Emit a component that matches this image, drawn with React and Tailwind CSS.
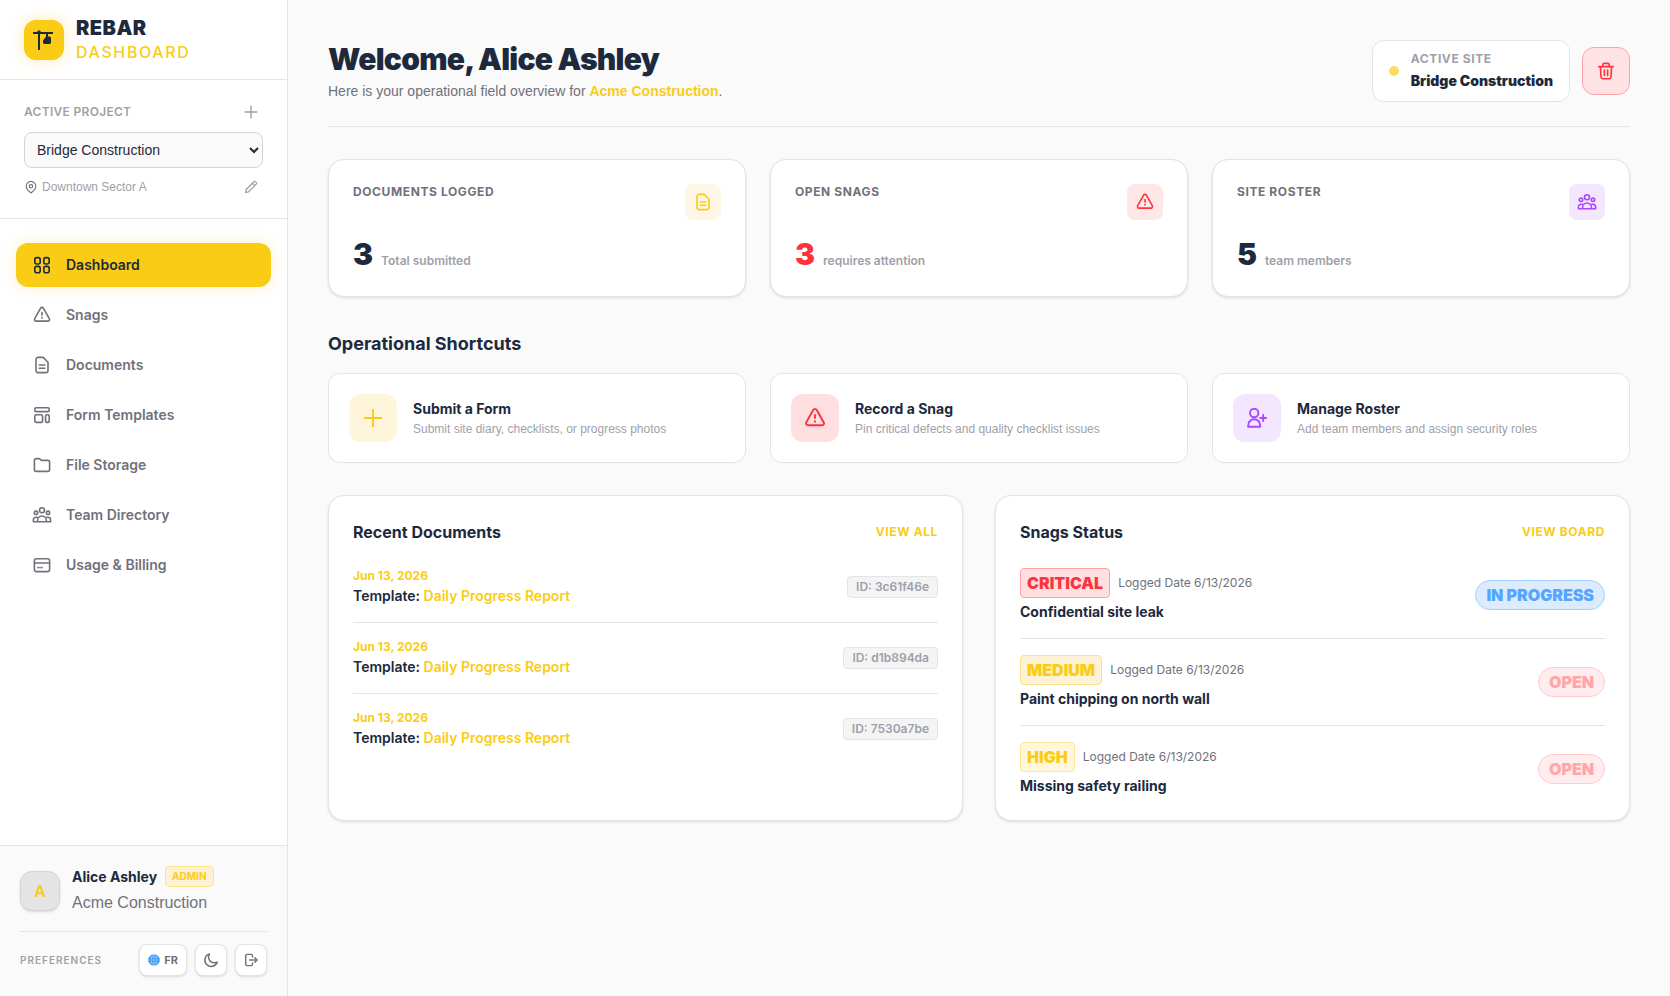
import { clsx } from 'clsx';

const icons = {
    grid: (
        <>
            <rect x="2.8" y="2.6" width="5.4" height="6.4" rx="2" />
            <rect x="11.8" y="2.6" width="5.4" height="6.4" rx="2" />
            <rect x="2.8" y="11.4" width="5.4" height="6.4" rx="2" />
            <rect x="11.8" y="11.4" width="5.4" height="6.4" rx="2" />
        </>
    ),
    alert: (
        <>
            <path d="M8.5 3.3a1.7 1.7 0 0 1 3 0l5.8 10.4a1.6 1.6 0 0 1-1.4 2.4H4.1a1.6 1.6 0 0 1-1.4-2.4z" />
            <path d="M10 7.5v2.6M10 12.6v.5" />
        </>
    ),
    document: (
        <>
            <path d="M4 4.4a2 2 0 0 1 2-2h5.2L16 7.2v8.4a2 2 0 0 1-2 2H6a2 2 0 0 1-2-2z" />
            <path d="M7.2 10h5.6M7.2 13.2h5.6" />
        </>
    ),
    template: (
        <>
            <rect x="2.8" y="2.8" width="14.4" height="3.8" rx="1.2" />
            <rect x="2.8" y="9.8" width="7.8" height="7.6" rx="1.4" />
            <rect x="13.6" y="9.8" width="3.6" height="7.6" rx="1.2" />
        </>
    ),
    folder: <path d="M2.4 5.4A1.8 1.8 0 0 1 4.2 3.6h2.6c.6 0 1 .2 1.4.6l.6.7c.3.3.7.5 1.2.5h5.8a1.8 1.8 0 0 1 1.8 1.8v7.4a1.8 1.8 0 0 1-1.8 1.8H4.2a1.8 1.8 0 0 1-1.8-1.8z" />,
    team: (
        <>
            <circle cx="10" cy="5.2" r="2.5" />
            <circle cx="4" cy="7.8" r="1.7" />
            <circle cx="16" cy="7.8" r="1.7" />
            <path d="M5.6 16.8v-1.4a4.4 4.4 0 0 1 8.8 0v1.4M5.2 12.2H4a2.6 2.6 0 0 0-2.6 2.6v2h17.2v-2a2.6 2.6 0 0 0-2.6-2.6h-1.2" />
        </>
    ),
    card: (
        <>
            <rect x="2.4" y="3.8" width="15.2" height="12.8" rx="2" />
            <path d="M2.4 8h15.2M6 12.6h1M9 12.6h1" />
        </>
    ),
    plus: <path d="M10 1.6v16.8M1.6 10h16.8" />,
    pencil: <path d="M2.2 17.8l.8-4.2L13.8 2.8a2.2 2.2 0 0 1 3.2 0l.2.2a2.2 2.2 0 0 1 0 3.2L6.4 17zM12 4.6L15.4 8" />,
    pin: (
        <>
            <path d="M10 18.4c2.8-2.2 6.8-5.2 6.8-9.6a6.8 6.8 0 0 0-13.6 0c0 4.4 4 7.4 6.8 9.6z" />
            <circle cx="10" cy="9" r="2.4" />
        </>
    ),
    trash: (
        <>
            <path d="M2.8 5.6h14.400M4.4 5.6l.6 10.4a2 2 0 0 0 2 1.8h6a2 2 0 0 0 2-1.8l.6-10.400" />
            <path d="M6.8 5.4V3.8a1.4 1.4 0 0 1 1.4-1.4h3.6a1.4 1.4 0 0 1 1.4 1.4v1.6M8.4 9v5.4M11.600 9v5.4" />
        </>
    ),
    userPlus: (
        <>
            <circle cx="7.200" cy="5" r="4.200" />
            <path d="M1.200 18.800v-1.600a6 6 0 0 1 12 0v1.600zM16.200 7v6M13.200 10h6" />
        </>
    ),
    moon: <path d="M8 2.400a8 8 0 1 0 9.800 10.400 7.400 7.400 0 0 1-3.400.6A7.200 7.200 0 0 1 8 2.400z" />,
    logout: (
        <>
            <path d="M12.200 5.800V4a2 2 0 0 0-2-2H4.400a2 2 0 0 0-2 2v12a2 2 0 0 0 2 2h5.800a2 2 0 0 0 2-2v-1.800" />
            <path d="M8 10h10.600M15.600 6.800l3.200 3.200-3.200 3.200" />
        </>
    ),
};

function Icon({ name, className, stroke = 1.6 }) {
    return (
        <svg
            viewBox="0 0 20 20"
            fill="none"
            stroke="currentColor"
            strokeWidth={stroke}
            strokeLinecap="round"
            strokeLinejoin="round"
            aria-hidden="true"
            className={clsx('shrink-0', className)}
        >
            {icons[name]}
        </svg>
    );
}

const navItems = [
    { icon: 'grid', label: 'Dashboard', active: true },
    { icon: 'alert', label: 'Snags' },
    { icon: 'document', label: 'Documents' },
    { icon: 'template', label: 'Form Templates' },
    { icon: 'folder', label: 'File Storage' },
    { icon: 'team', label: 'Team Directory' },
    { icon: 'card', label: 'Usage & Billing' },
];

const stats = [
    { label: 'Documents Logged', value: 3, note: 'Total submitted', icon: 'document', box: 'bg-[#fff7e6] text-[#facc15]', color: 'text-slate-800' },
    { label: 'Open Snags', value: 3, note: 'requires attention', icon: 'alert', box: 'bg-[#ffe6e7] text-[#ff333d]', color: 'text-[#ff333d]' },
    { label: 'Site Roster', value: 5, note: 'team members', icon: 'team', box: 'bg-[#f3e6ff] text-[#ad46ff]', color: 'text-slate-800' },
];

const shortcuts = [
    { title: 'Submit a Form', text: 'Submit site diary, checklists, or progress photos', icon: 'plus', box: 'bg-[#fff5db] text-[#facc15]' },
    { title: 'Record a Snag', text: 'Pin critical defects and quality checklist issues', icon: 'alert', box: 'bg-[#ffdfe0] text-[#ff333d]' },
    { title: 'Manage Roster', text: 'Add team members and assign security roles', icon: 'userPlus', box: 'bg-[#f3e6ff] text-[#ad46ff]' },
];

const documents = ['3c61f46e', 'd1b894da', '7530a7be'];

const snags = [
    { level: 'Critical', title: 'Confidential site leak', status: 'In Progress' },
    { level: 'Medium', title: 'Paint chipping on north wall', status: 'Open' },
    { level: 'High', title: 'Missing safety railing', status: 'Open' },
];

const levelStyles = {
    Critical: 'border-[#ffa2a6] bg-[#ffdfe0] text-[#ff333d]',
    Medium: 'border-[#fbe08a] bg-[#fdf1d6] text-[#facc15]',
    High: 'border-[#fde796] bg-[#fff6dc] text-[#facc15]',
};

const statusStyles = {
    'In Progress': 'border-[#a8cffc] bg-[#dcebfe] text-[#54a5ff]',
    Open: 'border-[#ffcacc] bg-[#ffecee] text-[#ffa6a9]',
};

function Sidebar() {
    return (
        <aside className="flex w-72 shrink-0 flex-col border-r border-zinc-200 bg-white">
            {/* Brand */}
            <div className="flex h-20 items-center gap-3 border-b border-zinc-200 px-6">
                <div className="flex size-10 items-center justify-center rounded-xl bg-[#facc15] shadow-[0_0_15px_rgba(251,191,36,0.35)]">
                    <svg viewBox="0 0 24 24" className="size-6 text-slate-800" fill="currentColor" aria-hidden="true">
                        <path d="M1 4h4l1.200-1.600h1.600L9 4h12v2h-5v2.600h2l1 1.200v5l-1 1.200h-6l-1-1.200v-2.400l3-3.800V6H8v16H6V6H1z" />
                    </svg>
                </div>
                <div className="flex flex-col">
                    <span className="text-xl leading-6 font-black tracking-wide text-slate-800">REBAR</span>
                    <span className="text-base leading-6 font-medium tracking-widest text-[#facc15]">DASHBOARD</span>
                </div>
            </div>

            {/* Project picker */}
            <div className="border-b border-zinc-200 px-6 pt-6 pb-[23px]">
                <div className="flex items-center justify-between">
                    <label htmlFor="project" className="text-xs font-semibold tracking-wide text-zinc-400 uppercase">Active Project</label>
                    <button type="button" aria-label="Add project" className="mr-1 p-px text-zinc-400">
                        <Icon name="plus" className="size-3.5" stroke={2} />
                    </button>
                </div>
                <select id="project" className="mt-3 h-9 w-full rounded-lg border border-zinc-300 bg-zinc-50 px-2 font-['Liberation_Sans',sans-serif] text-sm text-slate-800">
                    <option>Bridge Construction</option>
                </select>
                <div className="mt-[11px] flex items-center justify-between">
                    <span className="flex items-center gap-1 font-['Liberation_Sans',sans-serif] text-xs text-zinc-400">
                        <Icon name="pin" className="size-3.5 text-zinc-500" />
                        Downtown Sector A
                    </span>
                    <button type="button" aria-label="Edit project" className="mr-1 p-px text-zinc-400">
                        <Icon name="pencil" className="size-3.5" stroke={1.8} />
                    </button>
                </div>
            </div>

            <nav className="flex flex-1 flex-col gap-1.5 px-4 py-6">
                {navItems.map((item) => (
                    <a
                        key={item.label}
                        href="#"
                        className={clsx(
                            'flex h-11 items-center gap-3.5 rounded-xl px-4 text-sm font-semibold',
                            item.active
                                ? 'bg-[#facc15] text-slate-800 shadow-[0_0_15px_rgba(251,191,36,0.25)]'
                                : 'text-zinc-500',
                        )}
                    >
                        <Icon name={item.icon} className="size-5" />
                        {item.label}
                    </a>
                ))}
            </nav>

            {/* User */}
            <div className="border-t border-zinc-200 bg-zinc-50 p-5">
                <div className="flex items-center gap-3">
                    <div className="flex size-10 items-center justify-center rounded-xl border border-zinc-300 bg-zinc-200 text-base font-semibold text-[#facc15] shadow-sm">A</div>
                    <div>
                        <div className="flex items-center gap-2">
                            <span className="text-sm font-bold text-slate-800">Alice Ashley</span>
                            <span className="rounded border border-[#fde68a] bg-[#fdf1d6] px-1.5 text-[10px] leading-[19px] font-bold text-[#facc15]">ADMIN</span>
                        </div>
                        <p className="mt-1 font-['Liberation_Sans',sans-serif] text-base text-zinc-500">Acme Construction</p>
                    </div>
                </div>
                <div className="mt-4 flex items-center justify-between border-t border-zinc-200 pt-3">
                    <span className="text-[10px] font-semibold tracking-widest text-zinc-400">PREFERENCES</span>
                    <div className="flex gap-2">
                        <button type="button" className="flex h-8 items-center gap-1 rounded-lg border border-zinc-200 bg-white px-2 text-[11px] font-bold text-zinc-500 shadow-sm">
                            <svg viewBox="0 0 12 12" className="size-3" fill="none" aria-hidden="true">
                                <circle cx="6" cy="6" r="5.800" fill="#2b92f5" />
                                <path d="M6 .4v11.200M.4 6h11.200M1.400 3.200h9.200M1.400 8.800h9.200" stroke="#b9dbff" strokeWidth=".6" />
                                <ellipse cx="6" cy="6" rx="2.800" ry="5.500" stroke="#b9dbff" strokeWidth=".6" />
                            </svg>
                            FR
                        </button>
                        <button type="button" aria-label="Dark mode" className="flex size-8 items-center justify-center rounded-lg border border-zinc-200 bg-white text-zinc-500 shadow-sm">
                            <Icon name="moon" className="size-4" stroke={1.8} />
                        </button>
                        <button type="button" aria-label="Log out" className="flex size-8 items-center justify-center rounded-lg border border-zinc-200 bg-white text-zinc-500 shadow-sm">
                            <Icon name="logout" className="size-3.5" stroke={2} />
                        </button>
                    </div>
                </div>
            </div>
        </aside>
    );
}

export default function App() {
    return (
        <div className="flex min-h-screen bg-zinc-50 font-['Inter','Liberation_Sans',sans-serif] text-slate-800">
            <Sidebar />

            <main className="min-w-0 flex-1 p-10">
                {/* Header */}
                <header className="flex items-center justify-between border-b border-zinc-200 pb-6">
                    <div>
                        <h1 className="text-3xl font-black tracking-tight">Welcome, Alice Ashley</h1>
                        <p className="mt-1 font-['Liberation_Sans',sans-serif] text-sm text-zinc-500">
                            Here is your operational field overview for <span className="font-bold text-[#facc15]">Acme Construction</span>.
                        </p>
                    </div>
                    <div className="flex items-center gap-3">
                        <div className="flex items-center gap-3 rounded-xl border border-zinc-200 bg-white px-4 py-2.5">
                            <span className="size-2.5 rounded-full bg-[#fddc63]"></span>
                            <div>
                                <p className="text-xs font-bold tracking-wider text-zinc-400">ACTIVE SITE</p>
                                <p className="mt-1 text-sm font-black">Bridge Construction</p>
                            </div>
                        </div>
                        <button type="button" aria-label="Delete site" className="flex size-12 items-center justify-center rounded-xl border border-[#ffa2a6] bg-[#ffe2e3] text-[#ff333d]">
                            <Icon name="trash" className="size-5" />
                        </button>
                    </div>
                </header>

                {/* Stats */}
                <section className="mt-8 grid grid-cols-3 gap-6">
                    {stats.map((stat) => (
                        <div key={stat.label} className="rounded-2xl border border-zinc-200 bg-white p-6 shadow-sm">
                            <div className="flex items-start justify-between">
                                <p className="text-xs font-bold tracking-wider text-zinc-500 uppercase">{stat.label}</p>
                                <div className={clsx('flex size-9 items-center justify-center rounded-lg', stat.box)}>
                                    <Icon name={stat.icon} className="size-5" />
                                </div>
                            </div>
                            <div className="mt-4 flex items-baseline gap-2">
                                <span className={clsx('text-3xl font-black', stat.color)}>{stat.value}</span>
                                <span className="text-xs font-semibold text-zinc-400">{stat.note}</span>
                            </div>
                        </div>
                    ))}
                </section>

                {/* Shortcuts */}
                <section className="mt-8">
                    <h2 className="text-lg leading-[30px] font-bold">Operational Shortcuts</h2>
                    <div className="mt-3.5 grid grid-cols-3 gap-6">
                        {shortcuts.map((item) => (
                            <button key={item.title} type="button" className="flex items-center gap-4 rounded-xl border border-zinc-200 bg-white p-5 text-left">
                                <span className={clsx('flex size-12 shrink-0 items-center justify-center rounded-xl', item.box)}>
                                    <Icon name={item.icon} className={item.icon === 'alert' ? 'size-6' : 'size-5'} stroke={item.icon === 'alert' ? 1.6 : 1.9} />
                                </span>
                                <span>
                                    <span className="block text-sm font-bold">{item.title}</span>
                                    <span className="mt-0.5 block font-['Liberation_Sans',sans-serif] text-xs text-zinc-400">{item.text}</span>
                                </span>
                            </button>
                        ))}
                    </div>
                </section>

                <section className="mt-8 grid grid-cols-2 gap-8">
                    <div className="rounded-2xl border border-zinc-200 bg-white p-6 shadow-sm">
                        <div className="mb-6 flex items-center justify-between">
                            <h2 className="text-base font-bold">Recent Documents</h2>
                            <a href="#" className="text-xs font-bold tracking-wider text-[#facc15]">VIEW ALL</a>
                        </div>
                        <ul className="divide-y divide-zinc-200">
                            {documents.map((id) => (
                                <li key={id} className="flex items-center justify-between py-4 first:pt-0 last:pb-0">
                                    <div>
                                        <p className="text-xs font-bold text-[#facc15]">Jun 13, 2026</p>
                                        <p className="mt-0.5 text-sm font-semibold">
                                            Template: <span className="text-[#facc15]">Daily Progress Report</span>
                                        </p>
                                    </div>
                                    <span className="rounded border border-zinc-200 bg-zinc-100 px-2 py-0.5 text-xs font-semibold text-zinc-400">ID: {id}</span>
                                </li>
                            ))}
                        </ul>
                    </div>

                    <div className="rounded-2xl border border-zinc-200 bg-white p-6 shadow-sm">
                        <div className="mb-6 flex items-center justify-between">
                            <h2 className="text-base font-bold">Snags Status</h2>
                            <a href="#" className="text-xs font-bold tracking-wider text-[#facc15]">VIEW BOARD</a>
                        </div>
                        <ul className="divide-y divide-zinc-200">
                            {snags.map((snag) => (
                                <li key={snag.title} className="flex items-center justify-between py-4 first:pt-0 last:pb-0">
                                    <div>
                                        <div className="flex items-center gap-2">
                                            <span className={clsx('rounded border px-1.5 py-0.5 text-base font-black uppercase', levelStyles[snag.level])}>{snag.level}</span>
                                            <span className="text-xs text-zinc-500">Logged Date 6/13/2026</span>
                                        </div>
                                        <p className="mt-1 text-sm font-bold">{snag.title}</p>
                                    </div>
                                    <span className={clsx('rounded-full border px-2.5 py-0.5 text-base font-black uppercase', statusStyles[snag.status])}>{snag.status}</span>
                                </li>
                            ))}
                        </ul>
                    </div>
                </section>
            </main>
        </div>
    );
}
